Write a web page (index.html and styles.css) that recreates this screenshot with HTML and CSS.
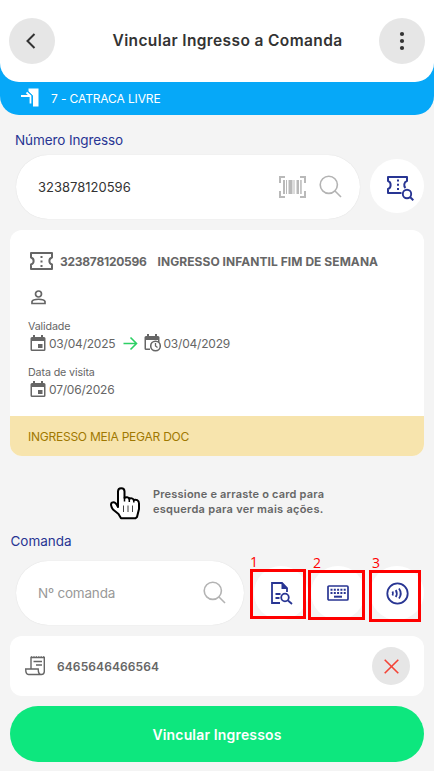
FILE: index.html
```html
<!DOCTYPE html>
<html lang="pt-BR">
<head>
<meta charset="utf-8">
<meta name="viewport" content="width=device-width, initial-scale=1">
<title>Vincular Ingresso a Comanda</title>
<link rel="stylesheet" href="styles.css">
</head>
<body>
<div class="gate">
  <header class="header">
    <button class="round" aria-label="Voltar"><svg width="46" height="46" viewBox="0 0 46 46" fill="none" stroke="#333" stroke-width="2"><path d="M25.500 16 18.500 23l7 7"/></svg></button>
    <h1 class="title">Vincular Ingresso a Comanda</h1>
    <button class="round" aria-label="Menu"><svg width="46" height="46" viewBox="0 0 46 46" fill="#333"><circle cx="23" cy="16" r="2.100"/><circle cx="23" cy="23" r="2.100"/><circle cx="23" cy="30" r="2.100"/></svg></button>
  </header>
  <div class="gate-row">
    <svg width="18" height="19" viewBox="0 0 18 19"><path d="M7.500.5h10v18H12V8L7.500 3.500z" fill="#fff"/><path d="M0 8h9M5.500 4.500 9.500 8v7.500" fill="none" stroke="#fff" stroke-width="1.800"/><path d="M7 3.500 11.400 7.500V18" fill="none" stroke="#06a8f8" stroke-width=".9"/></svg>
    <span class="gate-name">7 - CATRACA LIVRE</span>
  </div>
</div>

<main class="content">
  <h2 class="label label-ticket">Número Ingresso</h2>
  <div class="row ticket-row">
    <div class="field field-wide">
      <span class="value">323878120596</span>
      <svg class="barcode" width="27" height="22" viewBox="0 0 27 22" fill="#b9b9b9"><path d="M0 0h6v2H2v5H0zM21 0h6v7h-2V2h-4zM0 15h2v5h4v2H0zM25 15h2v7h-6v-2h4z"/><path d="M4 4h2v14H4zM7 4h1v14H7zM9.500 4h4v14h-4zM14.500 4h1v14h-1zM17.500 4h2.500v14h-2.500zM21.200 4h1.500v14h-1.500z"/></svg>
      <svg class="lens" width="23" height="23" viewBox="0 0 23 23" fill="none" stroke="#b3b3b3" stroke-width="1.600"><circle cx="9.800" cy="9.800" r="8.600"/><path d="m16 16 6 6"/></svg>
    </div>
    <button class="action find-ticket" aria-label="Buscar ingresso"><svg width="28" height="26" viewBox="0 0 28 26" fill="none" stroke="#283593" stroke-width="2" stroke-linejoin="round"><path d="M15.500 18H2v-4c3.500-1 3.500-7 0-8V2h19v4c-3.200 1-3.500 5-1.500 7"/><path d="M12 4.500v13" stroke-dasharray="2 2.200"/><circle cx="21" cy="19" r="4.200" stroke-width="1.900"/><path d="m24 22 3.300 3.300"/></svg></button>
  </div>

  <section class="card">
    <div class="card-body">
      <div class="card-title">
        <svg width="23" height="18" viewBox="0 0 23 18" fill="none" stroke="#666" stroke-width="2" stroke-linejoin="round"><path d="M1 1h21v4.500c-3.500 1-3.500 6 0 7V17H1v-4.500c3.500-1 3.500-6 0-7z"/><path d="M11.500 4v11" stroke-dasharray="2 2.500"/></svg>
        <b class="code">323878120596</b><b class="name">INGRESSO INFANTIL FIM DE SEMANA</b>
      </div>
      <svg class="person" width="16" height="15" viewBox="0 0 16 15" fill="none" stroke="#666" stroke-width="1.700"><circle cx="7.500" cy="4" r="3"/><path d="M1 13.500v-2C2 8.500 13 8.500 14 11.500v2z"/></svg>
      <div class="caption">Validade</div>
      <div class="dates">
        <svg width="16" height="17" viewBox="0 0 16 17"><path d="M2 2H14a1.500 1.500 0 0 1 1.500 1.500v11A1.500 1.500 0 0 1 14 16H2A1.500 1.500 0 0 1 .5 14.500v-11A1.500 1.500 0 0 1 2 2zM3 0h2v3H3zM11 0h2v3h-2z" fill="#666"/><path d="M2 6h12v8.500H2z" fill="#fff"/><path d="M8 9h4.500v4H8z" fill="#666"/></svg>
        <span class="date">03/04/2025</span>
        <svg class="arrow" width="15" height="15" viewBox="0 0 15 15" fill="none" stroke="#2cd064" stroke-width="1.600"><path d="M.5 7.500H13M7.500 1.500l6 6-6 6"/></svg>
        <svg width="18" height="18" viewBox="0 0 18 18"><path d="M2 2h12a1.500 1.500 0 0 1 1.500 1.500V8H14V6H2v8.500h4V16H2A1.500 1.500 0 0 1 .5 14.500v-11A1.500 1.500 0 0 1 2 2zM3 0h2v3H3zM11 0h2v3h-2z" fill="#666"/><circle cx="11.500" cy="12" r="4.800" fill="#fff" stroke="#666" stroke-width="1.600"/><path d="M11.500 9v3l2 1.500" fill="none" stroke="#666" stroke-width="1.300"/></svg>
        <span class="date date-end">03/04/2029</span>
      </div>
      <div class="caption caption-visit">Data de visita</div>
      <div class="dates">
        <svg width="16" height="17" viewBox="0 0 16 17"><path d="M2 2H14a1.500 1.500 0 0 1 1.500 1.500v11A1.500 1.500 0 0 1 14 16H2A1.500 1.500 0 0 1 .5 14.500v-11A1.500 1.500 0 0 1 2 2zM3 0h2v3H3zM11 0h2v3h-2z" fill="#666"/><path d="M2 6h12v8.500H2z" fill="#fff"/><path d="M8 9h4.500v4H8z" fill="#666"/></svg>
        <span class="date">07/06/2026</span>
      </div>
    </div>
    <div class="notice"><span class="notice-text">INGRESSO MEIA PEGAR DOC</span></div>
  </section>

  <div class="hint">
    <svg width="31" height="33" viewBox="0 0 31 33" fill="#fff" stroke="#000" stroke-width="2" stroke-linejoin="round"><path d="M8 17V4.500C8 0 14.500 0 14.500 4.500V11c1.500-1.300 4-.9 4.800.8 1.500-1 3.700-.5 4.300 1.200 2.500-.8 5.400 0 5.400 3.500v5.500l-2 8-1.500 1.300H11L8.500 27 3 22.500C1 20 .3 16.500 2 15.600c2.500-1.200 4.500.9 6 4.400z"/><path d="M14.500 10v4.500M19.300 11.500V15M23.800 13v2.500" stroke-width="1.500"/><path d="M13.500 18.500V25M18 18.500V25M22.500 18.500V25" stroke="#444" stroke-width="1"/></svg>
    <p class="hint-text"><span class="hint-first">Pressione e arraste o card para</span><br><span class="hint-second">esquerda para ver mais ações.</span></p>
  </div>

  <h2 class="label label-order">Comanda</h2>
  <div class="row order-row">
    <div class="field field-short">
      <span class="placeholder">Nº comanda</span>
      <svg class="lens" width="23" height="23" viewBox="0 0 23 23" fill="none" stroke="#b3b3b3" stroke-width="1.600"><circle cx="9.800" cy="9.800" r="8.600"/><path d="m16 16 6 6"/></svg>
    </div>
    <div class="slot slot-1">
      <button class="action" aria-label="Buscar comanda"><svg width="22" height="23" viewBox="0 0 22 23" fill="none" stroke="#283593" stroke-width="1.800"><path d="M9 21H1V1h10l5 5v4"/><path d="M10.500 0v7H17z" fill="#283593" stroke="none"/><path d="M4.500 12h5M4.500 16h4"/><circle cx="14" cy="15.500" r="3.800"/><path d="m17 18.500 4 3.500"/></svg></button>
      <div class="mark"><span class="num">1</span></div>
    </div>
    <div class="slot slot-2">
      <button class="action" aria-label="Digitar comanda"><svg width="22" height="16" viewBox="0 0 22 16" fill="none" stroke="#283593" stroke-width="1.700"><rect x="1" y="1" width="20" height="14" rx="1"/><path d="M3.500 4.800h15.500M3.500 8h15.500" stroke-width="2" stroke-dasharray="2 1.300"/><path d="M7 11.700h8" stroke-width="2"/></svg></button>
      <div class="mark"><span class="num">2</span></div>
    </div>
    <div class="slot slot-3">
      <button class="action" aria-label="Aproximar comanda"><svg width="23" height="23" viewBox="0 0 23 23" fill="none" stroke="#283593" stroke-width="1.800"><circle cx="11.500" cy="11.500" r="10.200"/><path d="M6.500 9.500q1 2 0 4M9.800 8q2 3.500 0 7M13 6.500q3.500 5 0 10"/></svg></button>
      <div class="mark"><span class="num">3</span></div>
    </div>
  </div>

  <div class="order">
    <svg width="21" height="20" viewBox="0 0 21 20" fill="none" stroke="#666" stroke-width="1.400"><path d="M6 13V1.500h13.300v14q0 3-3 3H3.500q-2.800 0-2.800-5.500h12.500q0 5.500 3 5.500"/><path d="M6 .9h13.300" stroke-dasharray="1.200 1.200"/><path d="M8.500 5.500h8.500M11 9h6"/></svg>
    <span class="order-code">6465646466564</span>
    <button class="remove" aria-label="Remover"><svg width="15" height="15" viewBox="0 0 15 15" fill="none" stroke="#f44336" stroke-width="1.600"><path d="m.7.7 13.600 13.600M14.300.7.7 14.300"/></svg></button>
  </div>

  <button class="submit"><span class="submit-text">Vincular Ingressos</span></button>
</main>
</body>
</html>
```
FILE: styles.css
```css
* { box-sizing: border-box; }
body {
  margin: 0;
  height: 771px;
  overflow: hidden;
  background: #f4f4f4;
  font-family: Inter, "Open Sans", sans-serif;
  color: #333;
}
button { border: 0; padding: 0; font: inherit; color: inherit; }
svg { display: block; flex: none; }
span, b { white-space: nowrap; }
h1, h2, p { margin: 0; }

.gate { height: 115px; background: #06a8f8; border-radius: 0 0 19px 19px; }
.header {
  display: flex;
  align-items: center;
  justify-content: space-between;
  height: 82px;
  padding: 0 9px;
  background: #fff;
  border-radius: 0 0 19px 19px;
}
.round { width: 46px; height: 46px; border-radius: 50%; background: #e6e6e6; }
.title { font-size: 15.5px; font-weight: 600; line-height: 20px; letter-spacing: .38px; margin: 0 0 1px 21px; white-space: nowrap; }
.gate-row { display: flex; align-items: center; height: 33px; padding: 0 0 2px 21px; color: #fff; }
.gate-name { margin-left: 12px; padding-top: 2px; font-size: 12px; letter-spacing: -.12px; }

.content { display: flex; flex-direction: column; padding: 0 10px; }
.label { font-size: 13.5px; font-weight: 400; line-height: 20px; letter-spacing: -.02px; color: #283593; white-space: nowrap; }
.label-ticket { margin: 15px 0 5px 5px; letter-spacing: -.1px; }
.row { display: flex; align-items: center; height: 64px; }
.ticket-row { padding-left: 6px; }
.field {
  display: flex;
  align-items: center;
  height: 64px;
  padding: 0 18px 0 22px;
  background: #fff;
  border-radius: 32px;
  box-shadow: 0 0 1px rgba(0, 0, 0, .15);
}
.field-wide { width: 344px; }
.value { flex: 1; font-size: 13px; }
.barcode { margin-right: 13px; }
.lens { margin-bottom: 1px; }
.action {
  display: flex;
  align-items: center;
  justify-content: center;
  width: 54px;
  height: 54px;
  border-radius: 50%;
  background: #fff;
}
.find-ticket { margin: 0 0 3px 10px; padding: 5px 0 0 5px; }

.card { width: 414px; height: 226px; margin-top: 11px; border-radius: 12px; overflow: hidden; background: #fff; color: #666; }
.card-body { height: 186px; padding: 22px 18px 0; }
.card-title { display: flex; align-items: center; height: 18px; padding-left: 2px; font-size: 12px; }
.code { margin-left: 7px; letter-spacing: -.25px; }
.name { margin-left: 11px; letter-spacing: .06px; }
.person { margin: 20px 0 0 3px; }
.caption { margin-top: 14px; font-size: 10.7px; line-height: 16px; letter-spacing: -.12px; }
.caption-visit { margin-top: 12px; }
.dates { display: flex; align-items: center; height: 18px; margin-top: -1px; padding: 1px 0 0 2px; font-size: 12px; letter-spacing: -.2px; }
.caption-visit { margin-top: 13px; }
.dates svg { margin-bottom: 1px; }
.date { margin-left: 3px; }
.date-end { margin-left: 1px; }
.dates .arrow { margin: 0 6px 0 8px; }
.notice { height: 40px; padding: 1px 18px 0; background: #f7e4ad; color: #a07800; font-size: 12px; line-height: 40px; letter-spacing: -.24px; }

.hint { display: flex; height: 33px; margin: 31px 0 0 100px; }
.hint-text { margin: 0 0 0 12px; font-size: 11px; font-weight: 600; line-height: 15px; color: #666; }
.hint-first { letter-spacing: .2px; }
.hint-second { letter-spacing: .27px; }

.label-order { margin: 11px 0 10px .5px; }
.order-row { padding-left: 6px; }
.field-short { width: 228px; }
.placeholder { flex: 1; font-size: 13.5px; letter-spacing: -.2px; color: #999; }
.slot { position: relative; }
.slot-1 { margin-left: 10px; }
.slot-2 { margin-left: 3px; }
.slot-3 { margin-left: 5px; }
.slot-1 .action { padding-left: 2px; }
.mark { position: absolute; border: 3px solid #f00; }
.slot-1 .mark { left: -4px; top: 3px; width: 56px; height: 50px; }
.slot-2 .mark { left: -3px; top: 4px; width: 57px; height: 50px; }
.slot-3 .mark { left: -1px; top: 4px; width: 52px; height: 52px; }
.num { position: absolute; left: -3px; top: -20px; color: #f00; font: 14px/20px "Open Sans", sans-serif; }
.slot-2 .num { left: 2px; }
.slot-3 .num { left: 0; }

.order { display: flex; align-items: center; width: 414px; height: 60px; margin-top: 11px; padding: 0 14px 0 15px; border-radius: 12px; background: #fff; color: #666; }
.order-code { flex: 1; margin-left: 11px; font-size: 12px; font-weight: 600; letter-spacing: .1px; }
.remove { display: flex; align-items: center; justify-content: center; width: 38px; height: 38px; border-radius: 50%; background: #e6e6e6; }

.submit { width: 414px; height: 56px; margin-top: 10px; border-radius: 28px; background: #0de77e; color: #fff; font-size: 14px; font-weight: 600; letter-spacing: .16px; }
```
